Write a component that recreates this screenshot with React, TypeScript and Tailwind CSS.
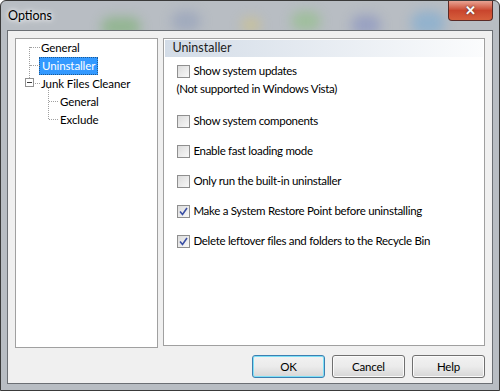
import React from "react";

const font = { fontFamily: 'Lato, "Noto Sans", Arial, sans-serif' };

function Check({ checked }: { checked?: boolean }) {
  return (
    <div className="w-[13px] h-[13px] border border-[#8f8f8f] bg-gradient-to-br from-[#dcdcdc] to-[#f8f8f8] flex items-center justify-center shrink-0">
      {checked && (
        <svg width="9" height="9" viewBox="0 0 9 9">
          <path d="M1 4.5 L3.5 7.5 L8 1" stroke="#3a4fa5" strokeWidth="1.6" fill="none" />
        </svg>
      )}
    </div>
  );
}

function Row({ label, checked, className = "" }: { label: string; checked?: boolean; className?: string }) {
  return (
    <div className={`flex items-center gap-[3px] h-[16px] ${className}`}>
      <Check checked={checked} />
      <span className="text-[11.5px] text-black leading-none tracking-[-0.3px]">{label}</span>
    </div>
  );
}

function Btn({ label, def }: { label: string; def?: boolean }) {
  return (
    <div
      className={`w-[73px] h-[23px] rounded-[3px] flex items-center justify-center text-[11.5px] tracking-[-0.2px] text-black bg-gradient-to-b from-[#f2f2f2] via-[#ebebeb] to-[#d6d6d6] ${
        def ? "border border-[#3c7fb1] shadow-[inset_0_0_0_1px_#7ee0f7]" : "border border-[#707070] shadow-[inset_0_0_0_1px_#fbfbfb]"
      }`}
    >
      {label}
    </div>
  );
}

export default function App() {
  return (
    <div style={font} className="w-[500px] h-[391px] relative overflow-hidden bg-[#b8bdc3] rounded-t-[6px] border border-[#3a3a3a] flex flex-col">
      <div className="absolute inset-0 pointer-events-none">
        <div className="absolute left-[100px] top-[16px] w-[40px] h-[20px] rounded-full bg-[#6fae62] blur-[6px] opacity-50" />
        <div className="absolute left-[170px] top-[10px] w-[30px] h-[20px] rounded-full bg-[#8a98b8] blur-[6px] opacity-50" />
        <div className="absolute left-[240px] top-[16px] w-[20px] h-[16px] rounded-full bg-[#d6c57a] blur-[6px] opacity-50" />
        <div className="absolute left-[290px] top-[10px] w-[30px] h-[20px] rounded-full bg-[#88c078] blur-[6px] opacity-50" />
        <div className="absolute left-[350px] top-[14px] w-[30px] h-[20px] rounded-full bg-[#7a86c0] blur-[6px] opacity-50" />
        <div className="absolute left-[410px] top-[10px] w-[34px] h-[24px] rounded-full bg-[#6ea8d8] blur-[6px] opacity-50" />
      </div>
      <div className="h-[29px] flex items-start relative shrink-0">
        <span className="ml-[7px] mt-[6px] text-[12.5px] text-black" style={{ textShadow: "0 0 8px #fff, 0 0 4px #fff" }}>
          Options
        </span>
        <div className="ml-auto mr-[6px] w-[45px] h-[20px] rounded-b-[4px] border border-[#5a2a26] border-t-0 bg-gradient-to-b from-[#e8a293] via-[#c9452d] to-[#d65f3c] flex items-center justify-center">
          <span className="text-white text-[13px] font-bold leading-none" style={{ textShadow: "0 0 2px #333" }}>
            ✕
          </span>
        </div>
      </div>
      <div className="flex-1 mx-[6px] mb-[6px] bg-[#f0f0f0] border border-[#6b6f74] relative flex flex-col px-[7px] pt-[7px] pb-[5px]">
        <div className="flex gap-[5px] flex-1">
          <div className="w-[144px] h-[310px] bg-white border border-[#a0a0a0] relative">
            <div className="absolute left-[13px] top-[8px] w-[1px] h-[35px] border-l border-dotted border-[#a0a0a0]" />
            <div className="absolute left-[14px] top-[8px] w-[10px] border-t border-dotted border-[#a0a0a0]" />
            <div className="absolute left-[14px] top-[26px] w-[10px] border-t border-dotted border-[#a0a0a0]" />
            <div className="absolute left-[32px] top-[49px] w-[1px] h-[31px] border-l border-dotted border-[#a0a0a0]" />
            <div className="absolute left-[33px] top-[62px] w-[9px] border-t border-dotted border-[#a0a0a0]" />
            <div className="absolute left-[33px] top-[80px] w-[9px] border-t border-dotted border-[#a0a0a0]" />
            <div className="absolute left-[9px] top-[39px] w-[9px] h-[9px] border border-[#919191] bg-white flex items-center justify-center">
              <div className="w-[5px] h-[1px] bg-[#3c3c3c]" />
            </div>
            <div className="absolute left-[19px] top-[44px] w-[5px] border-t border-dotted border-[#a0a0a0]" />
            <div className="flex flex-col text-[11.5px] tracking-[-0.1px] text-black">
              <div className="h-[18px] flex items-center pl-[25px]">General</div>
              <div className="h-[18px] flex items-center pl-[23px]">
                <span className="bg-[#3399ff] text-white px-[2px] h-[18px] flex items-center border border-dotted border-[#1d5a94]">Uninstaller</span>
              </div>
              <div className="h-[18px] flex items-center pl-[25px]">Junk Files Cleaner</div>
              <div className="h-[18px] flex items-center pl-[44px]">General</div>
              <div className="h-[18px] flex items-center pl-[44px]">Exclude</div>
            </div>
          </div>
          <div className="w-[323px] h-[308px] bg-white border border-[#a0a0a0] p-[1px] flex flex-col">
            <div className="h-[17px] bg-gradient-to-r from-[#d3dce7] via-[#e7ecf2] to-[#fbfcfd] flex items-center pl-[7px] text-[12.5px] text-[#1e1e1e]">
              Uninstaller
            </div>
            <div className="pl-[12px] pt-[6px] flex flex-col">
              <Row label="Show system updates" />
              <div className="h-[16px] mt-[2px] flex items-center text-[11.5px] text-black -ml-[1px] tracking-[-0.3px]">(Not supported in Windows Vista)</div>
              <Row label="Show system components" className="mt-[16px]" />
              <Row label="Enable fast loading mode" className="mt-[14px]" />
              <Row label="Only run the built-in uninstaller" className="mt-[14px]" />
              <Row label="Make a System Restore Point before uninstalling" checked className="mt-[14px]" />
              <Row label="Delete leftover files and folders to the Recycle Bin" checked className="mt-[14px]" />
            </div>
          </div>
        </div>
        <div className="flex justify-end gap-[7px] mt-[7px]">
          <Btn label="OK" def />
          <Btn label="Cancel" />
          <Btn label="Help" />
        </div>
      </div>
    </div>
  );
}
